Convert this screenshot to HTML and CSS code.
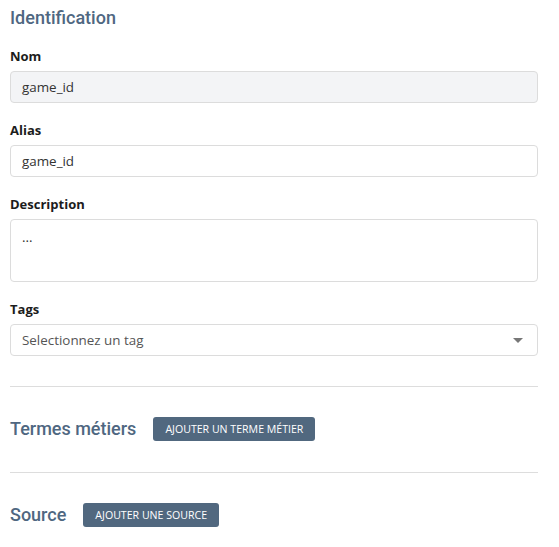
FILE: index.html
```html
<!DOCTYPE html>
<html lang="fr">
<head>
<meta charset="utf-8">
<link rel="stylesheet" href="styles.css">
</head>
<body>
<div class="page">
  <h2 class="section-title">Identification</h2>
  <div class="field">
    <label class="label">Nom</label>
    <div class="input disabled">game_id</div>
  </div>
  <div class="field">
    <label class="label">Alias</label>
    <div class="input">game_id</div>
  </div>
  <div class="field">
    <label class="label">Description</label>
    <div class="input textarea">...</div>
  </div>
  <div class="field">
    <label class="label">Tags</label>
    <div class="input select"><span>Selectionnez un tag</span><span class="caret"></span></div>
  </div>
  <hr class="divider first">
  <div class="section-row">
    <h2 class="section-title inline">Termes métiers</h2>
    <button class="btn">Ajouter un terme métier</button>
  </div>
  <hr class="divider">
  <div class="section-row">
    <h2 class="section-title inline">Source</h2>
    <button class="btn">Ajouter une source</button>
  </div>
</div>
</body>
</html>
```
FILE: styles.css
```css
* { box-sizing: border-box; }
body {
  margin: 0;
  background: #fff;
  font-family: "Open Sans", "Noto Sans", sans-serif;
  color: #222;
}
.page {
  padding: 6px 21px 0 10px;
}
.section-title {
  margin: 0 0 17px;
  font-family: Roboto, sans-serif;
  font-weight: 500;
  font-size: 18px;
  line-height: 24px;
  color: #4f6781;
}
.field {
  margin-bottom: 18px;
}
.label {
  display: block;
  font-size: 13px;
  font-weight: 700;
  line-height: 18px;
  margin-bottom: 6px;
  color: #1c1c1c;
}
.input {
  height: 32px;
  border: 1px solid #dcdcdc;
  border-radius: 4px;
  padding: 0 11px;
  display: flex;
  align-items: center;
  font-size: 13.4px;
  color: #333;
  background: #fff;
}
.input.disabled { background: #f3f4f6; }
.input.textarea {
  height: 63px;
  align-items: flex-start;
  padding-top: 8px;
}
.input.select {
  justify-content: space-between;
  color: #555;
}
.caret {
  width: 0; height: 0;
  border-left: 5px solid transparent;
  border-right: 5px solid transparent;
  border-top: 5px solid #777;
  margin-right: 3px;
}
.divider {
  border: 0;
  border-top: 1px solid #dddddd;
  margin: 0;
}
.divider.first {
  margin-top: 30px;
}
.section-row {
  display: flex;
  align-items: center;
  gap: 17px;
  height: 85px;
  padding-bottom: 2px;
}
.section-title.inline { margin: 0; }
.btn {
  background: #51687f;
  color: #fff;
  border: 0;
  border-radius: 3px;
  height: 24px;
  padding: 0 12px;
  font-family: "Open Sans", sans-serif;
  font-size: 10.6px;
  text-transform: uppercase;
}
```
